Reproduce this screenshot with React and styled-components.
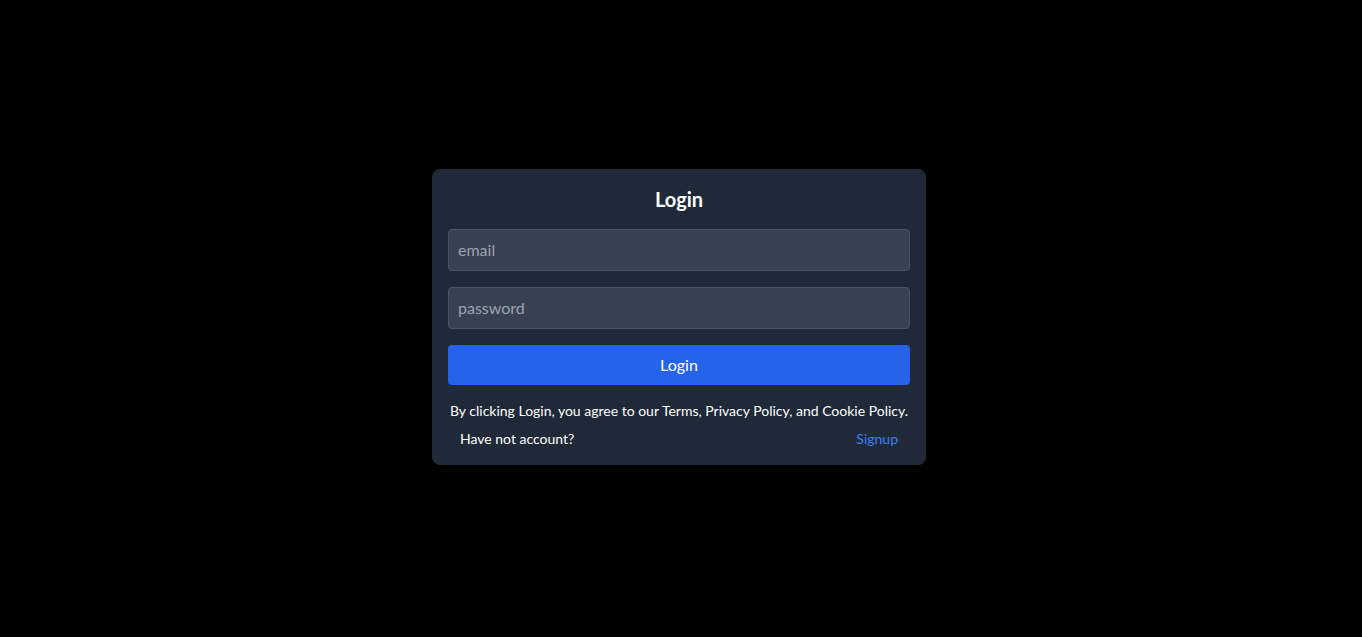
import styled, { createGlobalStyle } from 'styled-components';

const GlobalStyle = createGlobalStyle`
  html, body {
    margin: 0;
    padding: 0;
    height: 100%;
    background: #000;
  }

  body {
    font-family: 'Lato', 'Noto Sans', sans-serif;
    color: #fff;
  }

  #root {
    height: 100%;
  }
`;

const Page = styled.div`
  height: 100%;
  display: flex;
  align-items: center;
  justify-content: center;
  padding: 0 4px 4px 0;
  box-sizing: border-box;
`;

const Card = styled.form`
  width: 494px;
  box-sizing: border-box;
  padding: 16px;
  background: #1f2937;
  border-radius: 8px;
  display: flex;
  flex-direction: column;
`;

const Title = styled.h2`
  margin: 0 0 16px;
  font-size: 20px;
  line-height: 28px;
  font-weight: 700;
  text-align: center;
`;

const Field = styled.input`
  height: 42px;
  box-sizing: border-box;
  margin-bottom: 16px;
  padding: 0 9px;
  font-family: inherit;
  font-size: 16px;
  color: #fff;
  background: #374151;
  border: 1px solid #4b5563;
  border-radius: 4px;
  outline: none;

  &::placeholder {
    color: #9ca3af;
  }
`;

const SubmitButton = styled.button`
  height: 40px;
  border: none;
  border-radius: 4px;
  background: #2563eb;
  color: #fff;
  font-family: inherit;
  font-size: 16px;
  cursor: pointer;
`;

const Terms = styled.p`
  margin: 16px 0 8px;
  font-size: 14px;
  line-height: 20px;
  text-align: center;
  white-space: nowrap;
`;

const FooterRow = styled.div`
  display: flex;
  justify-content: space-between;
  padding: 0 12px;
  font-size: 14px;
  line-height: 20px;
`;

const SignupLink = styled.a`
  color: #3b82f6;
  text-decoration: none;
  cursor: pointer;
`;

export default function App() {
  return (
    <>
      <GlobalStyle />
      <Page>
        <Card onSubmit={e => e.preventDefault()}>
          <Title>Login</Title>
          <Field type="email" placeholder="email" />
          <Field type="password" placeholder="password" />
          <SubmitButton type="submit">Login</SubmitButton>
          <Terms>
            By clicking Login, you agree to our Terms, Privacy Policy, and Cookie Policy.
          </Terms>
          <FooterRow>
            <span>Have not account?</span>
            <SignupLink>Signup</SignupLink>
          </FooterRow>
        </Card>
      </Page>
    </>
  );
}
